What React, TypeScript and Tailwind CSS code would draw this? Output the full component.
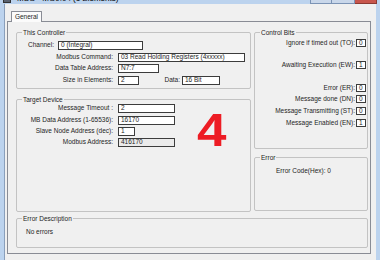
import type { ReactNode } from 'react'

function Group({ title, className, children }: { title: string; className: string; children?: ReactNode }) {
  return (
    <div className={`relative border border-[#c3c3c3] rounded-[2px] ${className}`}>
      <span className="absolute -top-[5px] left-[5px] px-[1px] bg-[#f0f0f0] leading-[9px]">{title}</span>
      {children}
    </div>
  )
}

function Box({ className, children, gray }: { className: string; children: ReactNode; gray?: boolean }) {
  return (
    <div
      className={`flex items-center h-[9px] border border-[#3c3c3c] pl-[2px] whitespace-nowrap overflow-hidden ${
        gray ? 'bg-[#ebebeb]' : 'bg-white'
      } ${className}`}
    >
      {children}
    </div>
  )
}

function Bit({ label, value, className }: { label: string; value: string; className?: string }) {
  return (
    <div className={`flex items-center ${className ?? ''}`}>
      <span>{label}</span>
      <div className="ml-[1px] w-[10px] h-[8px] border border-[#3c3c3c] bg-white flex items-center pl-[2px]">{value}</div>
    </div>
  )
}

export default function App() {
  return (
    <div className="w-[380px] h-[260px] overflow-hidden bg-[#bcd3ee] flex flex-col font-['Liberation_Sans',Arial,sans-serif] text-[6.5px] leading-none text-[#1e1e1e]">
      {/* title bar, mostly cut off */}
      <div className="h-[4px] flex justify-between overflow-hidden">
        <div className="flex items-start -mt-[6px] pl-[3px] gap-[6px]">
          <div className="w-[8px] h-[9px] bg-[#5a6270] border border-[#333]" />
          <span className="text-[8px] leading-[9px] text-black">MSG - MG9:0 : (1 Elements)</span>
        </div>
        <div className="flex mr-[3px]">
          <div className="w-[22px] h-[4px] bg-[#c9d7ea] border-x border-b border-[#7b93b5]" />
          <div className="w-[23px] h-[4px] bg-[#c9d7ea] border-r border-b border-[#7b93b5]" />
          <div className="w-[22px] h-[4px] bg-[#c8564d] border-r border-b border-[#8b3a33]" />
        </div>
      </div>

      <div className="flex-1 flex">
        <div className="ml-[4px] w-[372px] bg-[#f0f0f0] border-l border-[#8a9fbb] pt-[7px] pl-[2px]">
          <div className="ml-[4px] w-[31px] h-[11px] border border-b-0 border-[#898c95] bg-[#fbfbfb] flex items-center justify-center relative z-10 -mb-[1px] rounded-t-[1px]">
            General
          </div>

          <div className="w-[364px] h-[233px] border border-[#898c95] pt-[10px] pl-[8px] flex flex-col">
            <div className="flex gap-[3px]">
              <div className="w-[235px] flex flex-col gap-[10px]">
                <Group title="This Controller" className="h-[57px]">
                  <div className="flex flex-col pt-[8px]">
                    <div className="flex items-center">
                      <span className="w-[37px] text-right">Channel:</span>
                      <Box className="ml-[4px] w-[85px]">0 (Integral)</Box>
                    </div>
                    <div className="flex items-center mt-[3px]">
                      <span className="w-[96px] text-right">Modbus Command:</span>
                      <Box className="ml-[5px] w-[127px]">03 Read Holding Registers (4xxxxx)</Box>
                    </div>
                    <div className="flex items-center mt-[2px]">
                      <span className="w-[96px] text-right">Data Table Address:</span>
                      <Box className="ml-[5px] w-[41px]">N7:7</Box>
                    </div>
                    <div className="flex items-center mt-[3px]">
                      <span className="w-[96px] text-right">Size in Elements:</span>
                      <Box className="ml-[5px] w-[21px]">2</Box>
                      <span className="w-[41px] text-right">Data:</span>
                      <Box className="ml-[2px] w-[38px]">16 Bit</Box>
                    </div>
                  </div>
                </Group>

                <Group title="Target Device" className="h-[113px]">
                  <div className="flex flex-col pt-[4px]">
                    <div className="flex items-center">
                      <span className="w-[96px] text-right">Message Timeout :</span>
                      <Box className="ml-[5px] w-[57px]">2</Box>
                    </div>
                    <div className="flex items-center mt-[3px]">
                      <span className="w-[96px] text-right">MB Data Address (1-65536):</span>
                      <Box className="ml-[5px] w-[57px]">16170</Box>
                    </div>
                    <div className="flex items-center mt-[2px]">
                      <span className="w-[96px] text-right">Slave Node Address (dec):</span>
                      <Box className="ml-[5px] w-[17px]">1</Box>
                    </div>
                    <div className="flex items-center mt-[2px]">
                      <span className="w-[96px] text-right">Modbus Address:</span>
                      <Box className="ml-[5px] w-[57px]" gray>
                        416170
                      </Box>
                    </div>
                  </div>
                  <span className="absolute left-[180px] top-[7px] origin-left scale-x-[1.15] text-[46px] leading-none font-bold text-[#ed1c24]">
                    4
                  </span>
                </Group>
              </div>

              <div className="w-[114px] flex flex-col gap-[8px]">
                <Group title="Control Bits" className="h-[117px]">
                  <div className="flex flex-col items-end pt-[6px] pr-[1px]">
                    <Bit label="Ignore if timed out (TO):" value="0" />
                    <Bit label="Awaiting Execution (EW):" value="1" className="mt-[14px]" />
                    <Bit label="Error (ER):" value="0" className="mt-[15px]" />
                    <Bit label="Message done (DN):" value="0" className="mt-[3px]" />
                    <Bit label="Message Transmitting (ST):" value="0" className="mt-[4px]" />
                    <Bit label="Message Enabled (EN):" value="1" className="mt-[4px]" />
                  </div>
                </Group>
                <Group title="Error" className="h-[54px]">
                  <div className="pt-[10px] pl-[21px]">Error Code(Hex): 0</div>
                </Group>
              </div>
            </div>

            <Group title="Error Description" className="mt-[6px] w-[352px] h-[30px]">
              <div className="pt-[10px] pl-[9px]">No errors</div>
            </Group>
          </div>
        </div>
      </div>
    </div>
  )
}
